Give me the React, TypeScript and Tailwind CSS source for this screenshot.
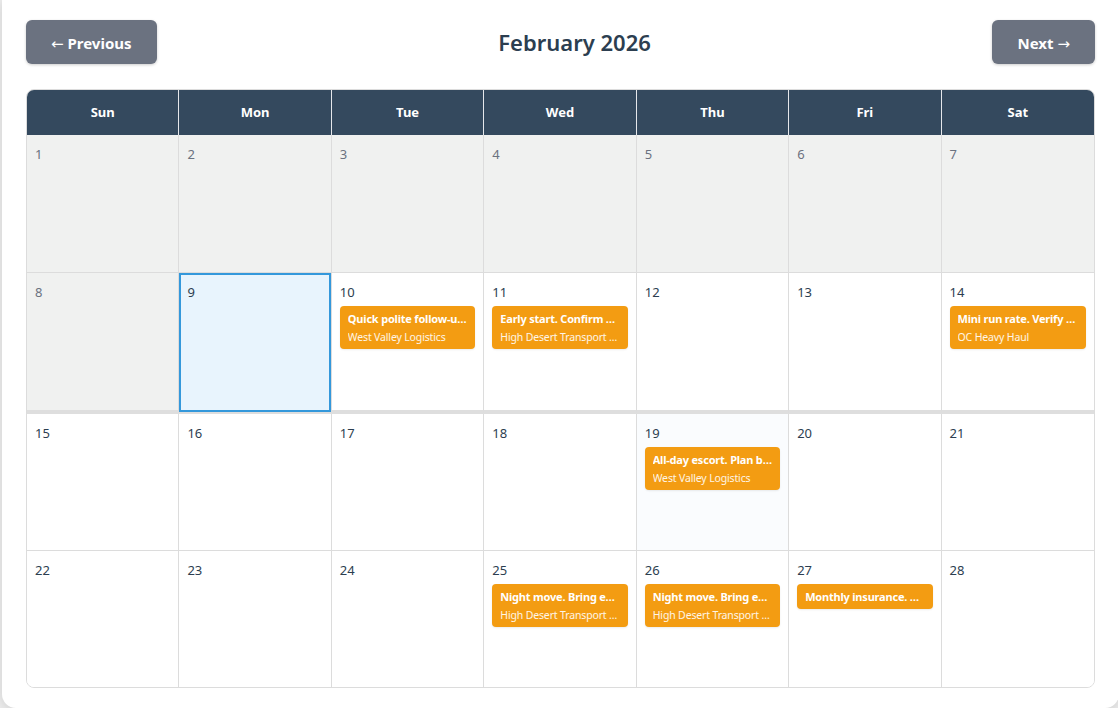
import React from "react";

type CalEvent = { title: string; client?: string };

const days = ["Sun", "Mon", "Tue", "Wed", "Thu", "Fri", "Sat"];

const events: Record<number, CalEvent[]> = {
  10: [{ title: "Quick polite follow-up call", client: "West Valley Logistics" }],
  11: [{ title: "Early start. Confirm route", client: "High Desert Transport Co." }],
  14: [{ title: "Mini run rate. Verify permits", client: "OC Heavy Haul" }],
  19: [{ title: "All-day escort. Plan breaks", client: "West Valley Logistics" }],
  25: [{ title: "Night move. Bring extra lights", client: "High Desert Transport Co." }],
  26: [{ title: "Night move. Bring extra lights", client: "High Desert Transport Co." }],
  27: [{ title: "Monthly insurance. Renew policy" }],
};

const TODAY = 9;
const rowHeights = ["h-[138px]", "h-[141px]", "h-[137px]", "h-[136px]"];

function DayCell({ day, col, row }: { day: number; col: number; row: number }) {
  const past = day < TODAY;
  const today = day === TODAY;
  const list = events[day] || [];

  let cls = "relative px-2 pt-[9px] border-[#dcdcdc] " + rowHeights[row];
  if (col < 6) cls += " border-r";
  if (row < 3) cls += row === 1 ? " border-b-4 border-b-[#dedede]" : " border-b";
  if (today) cls += " bg-[#e8f4fd]";
  else if (past) cls += " bg-[#f0f1f0]";
  else if (day === 19) cls += " bg-[#fafcfe]";
  else cls += " bg-white";

  return (
    <div className={cls}>
      {today && (
        <div className="absolute inset-0 -bottom-[2px] border-2 border-[#3498db] pointer-events-none" />
      )}
      <div
        className={
          "text-[13px] leading-[20px] " + (past ? "text-[#6b7280]" : "text-[#2c3e50]")
        }
      >
        {day}
      </div>
      <div className="mt-[4px] flex flex-col gap-1">
        {list.map((e, i) => (
          <div
            key={i}
            className="rounded-[4px] bg-[#f39c12] px-2 pt-[4px] pb-[3px] text-white shadow-[0_1px_2px_rgba(0,0,0,0.08)]"
          >
            <div className="truncate text-[11px] font-bold leading-[18px] tracking-[-0.2px]">
              {e.title}
            </div>
            {e.client && (
              <div className="truncate text-[10.5px] leading-[18px] tracking-[-0.15px] text-white/90">
                {e.client}
              </div>
            )}
          </div>
        ))}
      </div>
    </div>
  );
}

export default function App() {
  const weeks = [0, 1, 2, 3];
  const arrow = { fontFamily: '"DejaVu Sans", sans-serif' };
  return (
    <div
      className="h-[708px] w-[1118px] overflow-hidden bg-[#ececec] pl-[2px]"
      style={{ fontFamily: '"Noto Sans", "Open Sans", sans-serif' }}
    >
      <div className="h-[708px] w-[1117px] rounded-b-[14px] bg-white pl-6 pr-[24px] pt-5 shadow-[0_2px_12px_rgba(0,0,0,0.12)]">
        <div className="flex h-11 items-center justify-between">
          <button className="h-11 rounded-md bg-[#6b7280] px-[25px] pt-[3px] text-[15px] font-bold text-white shadow-[0_1px_3px_rgba(0,0,0,0.2)]">
            <span className="font-normal" style={arrow}>←</span> Previous
          </button>
          <h2 className="pt-[1px] text-[22px] font-semibold text-[#2c3e50]">February 2026</h2>
          <button className="h-11 rounded-md bg-[#6b7280] px-[25px] pt-[3px] text-[15px] font-bold text-white shadow-[0_1px_3px_rgba(0,0,0,0.2)]">
            Next <span className="font-normal" style={arrow}>→</span>
          </button>
        </div>

        <div className="mt-[25px] overflow-hidden rounded-lg border border-[#dcdcdc]">
          <div className="grid grid-cols-7 bg-[#34495e]">
            {days.map((d, i) => (
              <div
                key={d}
                className={
                  "flex h-[45px] items-center justify-center text-[13px] font-bold text-white" +
                  (i < 6 ? " border-r border-[#e5e7eb]" : "")
                }
              >
                {d}
              </div>
            ))}
          </div>
          {weeks.map((w) => (
            <div key={w} className="grid grid-cols-7">
              {days.map((_, c) => (
                <DayCell key={c} day={w * 7 + c + 1} col={c} row={w} />
              ))}
            </div>
          ))}
        </div>
      </div>
    </div>
  );
}
